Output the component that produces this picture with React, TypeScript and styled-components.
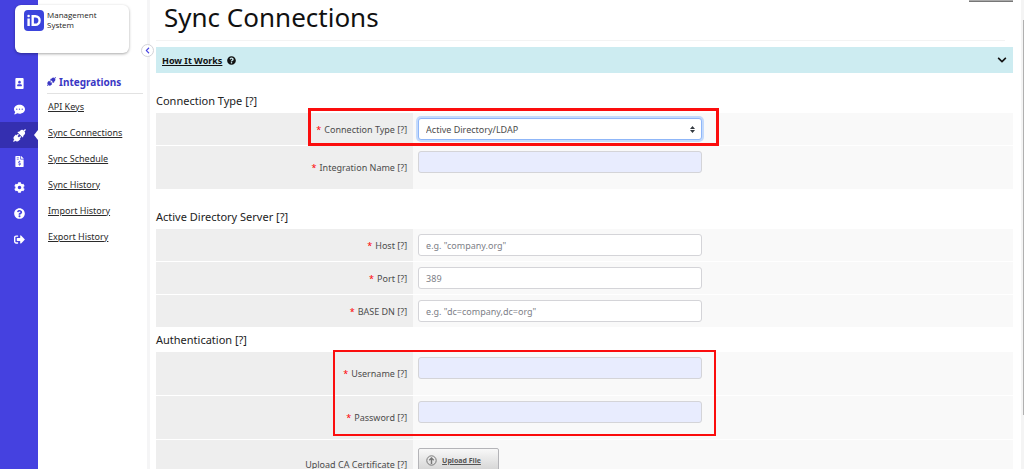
import React from "react";
import styled, { createGlobalStyle, css } from "styled-components";
import {
  FaChevronDown,
  FaChevronLeft,
  FaCog,
  FaCommentDots,
  FaFileInvoiceDollar,
  FaPortrait,
  FaQuestionCircle,
  FaSignOutAlt,
} from "react-icons/fa";

const color = {
  brand: "#4541e0",
  brandDark: "#342fb0",
  brandText: "#3a37c4",
  banner: "#cdecf1",
  label: "#eeeeee",
  field: "#f9f9f9",
  autofill: "#e8ecfe",
  text: "#4c4c4c",
  border: "#d4d4d8",
  mark: "#fb0d0d",
};

const GlobalStyle = createGlobalStyle`
  *, *::before, *::after { box-sizing: border-box; }
  body {
    margin: 0;
    overflow: hidden;
    background: #fff;
    color: #222;
    font-family: "Noto Sans", "Open Sans", sans-serif;
    font-size: 9px;
  }
  button, input, select { font: inherit; }
`;

const Shell = styled.div`
  position: relative;
  display: flex;
  height: 100vh;
  overflow: hidden;
`;

const Rail = styled.nav`
  flex: 0 0 38px;
  padding-top: 70px;
  background: ${color.brand};
`;

const RailLink = styled.a<{ $active?: boolean }>`
  position: relative;
  display: flex;
  align-items: center;
  justify-content: center;
  height: 26px;
  color: #fff;
  font-size: 11px;

  ${(p) =>
    p.$active &&
    css`
      background: ${color.brandDark};

      &::after {
        content: "";
        position: absolute;
        right: 0;
        border: 5px solid transparent;
        border-left: 0;
        border-right: 4px solid #fff;
      }
    `}
`;

const SubMenu = styled.nav`
  position: relative;
  flex: 0 0 112px;
  padding: 70px 4px 0 9px;
  border-right: 3px solid #f5f5f6;
`;

const SubMenuTitle = styled.h2`
  display: flex;
  align-items: center;
  gap: 3px;
  height: 24px;
  margin: 0;
  border-bottom: 1px solid #e2e2e2;
  color: ${color.brandText};
  font-size: 10px;
  font-weight: 700;
`;

const SubMenuLink = styled.a`
  display: flex;
  align-items: center;
  height: 26px;
  padding: 0 0 2px 1px;
  color: #2b2b2b;
  white-space: nowrap;
`;

const Collapse = styled.button`
  position: absolute;
  top: 44px;
  right: -7px;
  z-index: 2;
  display: grid;
  place-items: center;
  width: 13px;
  height: 13px;
  padding: 0;
  border: 1px solid #d3d3d8;
  border-radius: 50%;
  background: #fff;
  color: ${color.brand};
  font-size: 7px;
`;

const LogoCard = styled.div`
  position: absolute;
  top: 5px;
  left: 15px;
  z-index: 1;
  display: flex;
  gap: 3px;
  width: 114px;
  height: 48px;
  padding: 5px 9px;
  border-radius: 6px;
  background: #fff;
  box-shadow: 0 1px 3px rgba(0, 0, 0, 0.35);
`;

const LogoText = styled.span`
  color: #222;
  font-family: "Open Sans", "Noto Sans", sans-serif;
  font-size: 8px;
  line-height: 10px;
`;

const Main = styled.main`
  flex: 1;
  min-width: 0;
  padding: 0 8px 0 6px;
`;

const TopButton = styled.button`
  display: block;
  width: 44px;
  height: 2px;
  margin-left: auto;
  padding: 0;
  border: 0;
  border-bottom: 1px solid #777;
  background: #aaa;
`;

const Title = styled.h1`
  margin: 0 8px 6px 0;
  padding: 0 8px 8px;
  border-bottom: 1px solid #f3f3f3;
  color: #111;
  font-size: 26px;
  font-weight: 400;
  line-height: 30px;
`;

const Banner = styled.button`
  display: flex;
  align-items: center;
  gap: 5px;
  width: 100%;
  height: 26px;
  padding: 0 6px;
  border: 0;
  background: ${color.banner};
  color: #111;
  font-weight: 700;
`;

const BannerText = styled.span`
  text-decoration: underline;
`;

const BannerArrow = styled(FaChevronDown)`
  margin-left: auto;
  font-size: 10px;
`;

const SectionTitle = styled.h3<{ $tight?: boolean }>`
  margin: ${(p) => (p.$tight ? 4 : 19)}px 0 3px;
  color: #222;
  font-size: 11px;
  font-weight: 400;
  line-height: 18px;
`;

const Fields = styled.div`
  position: relative;
  display: flex;
  flex-direction: column;
  gap: 1px;
`;

const Row = styled.div<{ $height: number }>`
  display: grid;
  grid-template-columns: 30% 1fr;
  min-height: ${(p) => p.$height}px;
`;

const Label = styled.label`
  display: flex;
  align-items: center;
  justify-content: flex-end;
  gap: 3px;
  padding-right: 6px;
  background: ${color.label};
  color: ${color.text};
`;

const Star = styled.span`
  color: #f00;
`;

const Cell = styled.div`
  padding: 5px;
  background: ${color.field};
`;

const control = css`
  display: block;
  width: 284px;
  max-width: 100%;
  height: 22px;
  padding: 0 7px;
  border: 1px solid ${color.border};
  border-radius: 3px;
  background: #fff;
  color: ${color.text};
  outline: 0;
`;

const TextInput = styled.input<{ $filled?: boolean }>`
  ${control}
  ${(p) => p.$filled && `background: ${color.autofill};`}

  &::placeholder {
    color: #7d8087;
    opacity: 1;
  }
`;

const SelectWrap = styled.div`
  position: relative;
  width: 284px;
  max-width: 100%;
`;

const Select = styled.select`
  ${control}
  appearance: none;
  border-color: #8fb6f8;
  box-shadow: 0 0 0 2px #c3dafc;
`;

const SelectArrows = styled.svg`
  position: absolute;
  top: 8px;
  right: 7px;
  pointer-events: none;
`;

const Highlight = styled.div<{ $thick: number }>`
  position: absolute;
  border: ${(p) => p.$thick}px solid ${color.mark};
  pointer-events: none;
`;

const TypeHighlight = styled(Highlight)`
  top: -5px;
  left: calc(30% - 105px);
  width: 411px;
  height: 38px;
`;

const LoginHighlight = styled(Highlight)`
  top: -2px;
  left: calc(30% - 80px);
  width: 383px;
  height: 86px;
`;

const UploadButton = styled.button`
  display: flex;
  align-items: center;
  gap: 5px;
  width: 81px;
  height: 24px;
  margin-top: 3px;
  padding: 0 7px;
  border: 1px solid #b4b4b8;
  border-radius: 2px;
  background: linear-gradient(#f8f8f8, #d4d4d4);
  color: #555;
  font-size: 7px;
  font-weight: 700;
  text-decoration: underline;
  white-space: nowrap;
`;

const ScrollTrack = styled.div`
  flex: 0 0 3px;
  padding-top: 20px;
  background: #f4f4f4;
`;

const ScrollThumb = styled.div`
  width: 1px;
  height: 88%;
  margin-left: 2px;
  background: #b0b0b0;
`;

function PlugIcon({ size }: { size: number }) {
  return (
    <svg width={size} height={size} viewBox="0 0 16 16" fill="currentColor">
      <g transform="rotate(-45 8 8)">
        <path d="M-2.5 7.2H0V8.8H-2.5z" />
        <path d="M3.2 4H5.8V12H3.2A3.6 4 0 0 1 3.2 4z" />
        <path d="M5.6 5.2H8.2V6.8H5.6zM5.6 9.2H8.2V10.8H5.6z" />
        <path d="M9 3.4H10.4V4.4H12.4A3.6 3.6 0 0 1 12.4 11.6H10.4V12.6H9z" />
        <path d="M15.6 7.2H18.5V8.8H15.6z" />
      </g>
    </svg>
  );
}

const railItems = [
  { name: "Profiles", icon: <FaPortrait /> },
  { name: "Messages", icon: <FaCommentDots /> },
  { name: "Integrations", icon: <PlugIcon size={13} />, active: true },
  { name: "Billing", icon: <FaFileInvoiceDollar /> },
  { name: "Settings", icon: <FaCog /> },
  { name: "Help", icon: <FaQuestionCircle /> },
  { name: "Sign out", icon: <FaSignOutAlt /> },
];

const links = [
  "API Keys",
  "Sync Connections",
  "Sync Schedule",
  "Sync History",
  "Import History",
  "Export History",
];

type FieldProps = {
  id: string;
  label: string;
  tall?: boolean;
  type?: string;
  placeholder?: string;
  filled?: boolean;
};

function Field({ id, label, tall, type = "text", placeholder, filled }: FieldProps) {
  return (
    <Row $height={tall ? 43 : 32}>
      <Label htmlFor={id}>
        <Star>*</Star>
        {label} [?]
      </Label>
      <Cell>
        <TextInput id={id} type={type} placeholder={placeholder} $filled={filled} />
      </Cell>
    </Row>
  );
}

export default function App() {
  return (
    <>
      <GlobalStyle />
      <Shell>
        <LogoCard>
          <svg width="20" height="21" viewBox="0 0 20 21" aria-label="iD">
            <rect width="20" height="21" rx="4" fill="#3b44dc" />
            <g fill="none" stroke="#fff" strokeWidth="2.4">
              <path d="M4.6 8.5V16" />
              <path d="M8.7 6.2h2.6a4.3 4.3 0 0 1 0 8.6H8.7z" />
            </g>
            <circle cx="4.6" cy="6" r="1.3" fill="#fff" />
          </svg>
          <LogoText>
            Management
            <br />
            System
          </LogoText>
        </LogoCard>

        <Rail aria-label="Main">
          {railItems.map((item) => (
            <RailLink key={item.name} href="#" aria-label={item.name} $active={item.active}>
              {item.icon}
            </RailLink>
          ))}
        </Rail>

        <SubMenu aria-label="Integrations">
          <SubMenuTitle>
            <PlugIcon size={9} />
            Integrations
          </SubMenuTitle>
          {links.map((text) => (
            <SubMenuLink key={text} href="#">
              {text}
            </SubMenuLink>
          ))}
          <Collapse type="button" aria-label="Collapse menu">
            <FaChevronLeft />
          </Collapse>
        </SubMenu>

        <Main>
          <TopButton type="button" aria-label="Back" />
          <Title>Sync Connections</Title>
          <Banner type="button">
            <BannerText>How It Works</BannerText>
            <FaQuestionCircle />
            <BannerArrow />
          </Banner>

          <SectionTitle>Connection Type [?]</SectionTitle>
          <Fields>
            <Row $height={32}>
              <Label htmlFor="type">
                <Star>*</Star>
                Connection Type [?]
              </Label>
              <Cell>
                <SelectWrap>
                  <Select id="type" defaultValue="ldap">
                    <option value="ldap">Active Directory/LDAP</option>
                  </Select>
                  <SelectArrows width="5" height="7" viewBox="0 0 5 7">
                    <path d="M0 3L2.5 0L5 3zM0 4L2.5 7L5 4z" fill="#343a40" />
                  </SelectArrows>
                </SelectWrap>
              </Cell>
            </Row>
            <Field id="name" label="Integration Name" tall filled />
            <TypeHighlight $thick={3} />
          </Fields>

          <SectionTitle>Active Directory Server [?]</SectionTitle>
          <Fields>
            <Field id="host" label="Host" placeholder={'e.g. "company.org"'} />
            <Field id="port" label="Port" placeholder="389" />
            <Field id="base" label="BASE DN" placeholder={'e.g. "dc=company,dc=org"'} />
          </Fields>

          <SectionTitle $tight>Authentication [?]</SectionTitle>
          <Fields>
            <Field id="user" label="Username" tall filled />
            <Field id="pass" label="Password" type="password" tall filled />
            <Row $height={48}>
              <Label htmlFor="upload">Upload CA Certificate [?]</Label>
              <Cell>
                <UploadButton id="upload" type="button">
                  <svg width="11" height="11" viewBox="0 0 11 11" fill="none" stroke="#777">
                    <circle cx="5.5" cy="5.5" r="4.7" />
                    <path d="M5.5 9V3M3.3 5.2L5.5 3l2.2 2.2" strokeWidth="1.4" />
                  </svg>
                  Upload File
                </UploadButton>
              </Cell>
            </Row>
            <LoginHighlight $thick={2} />
          </Fields>
        </Main>

        <ScrollTrack>
          <ScrollThumb />
        </ScrollTrack>
      </Shell>
    </>
  );
}
